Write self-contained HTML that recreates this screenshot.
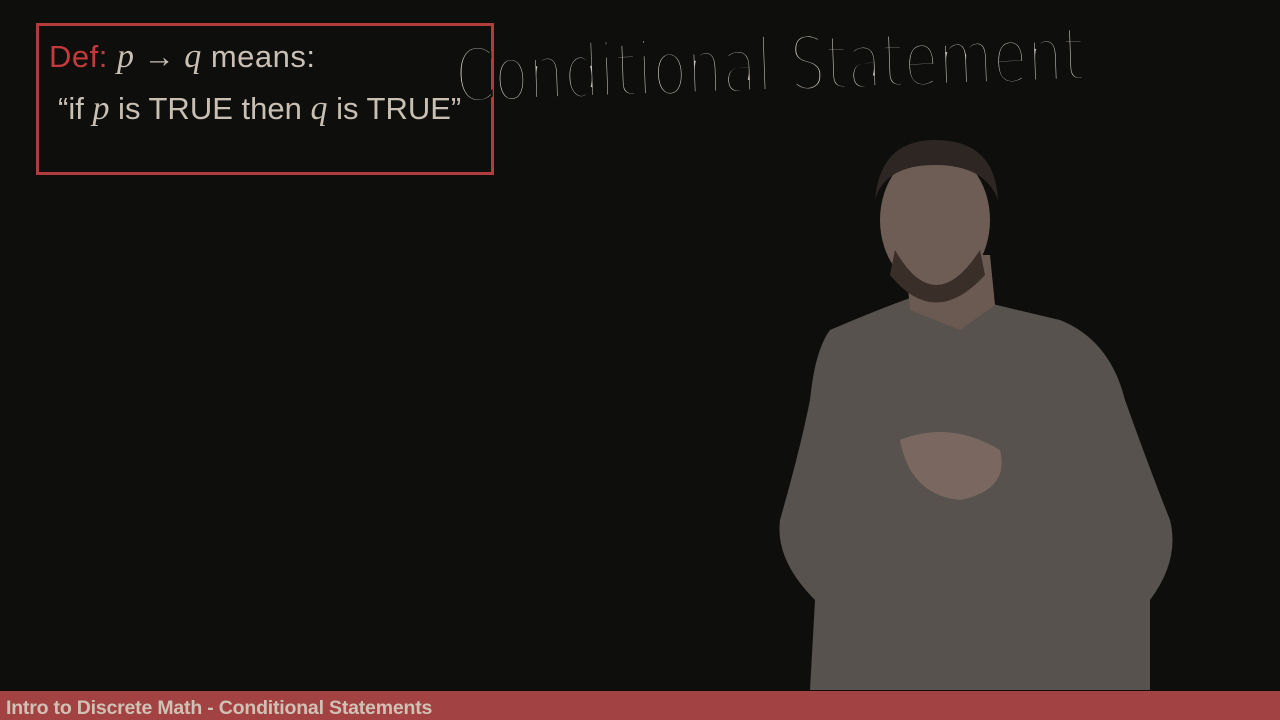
<!DOCTYPE html>
<html><head><style>
html,body{margin:0;padding:0;width:1280px;height:720px;overflow:hidden;background:#0e0f0d;font-family:"Liberation Sans",sans-serif}
.box{position:absolute;left:36px;top:23px;width:452px;height:146px;border:3px solid #b03c3c}
.l1{position:absolute;left:49px;top:38px;font-size:31px;color:#c9bfb3;white-space:nowrap;letter-spacing:0.5px}
.l2{position:absolute;left:58px;top:90px;font-size:31px;color:#c9bfb3;white-space:nowrap;letter-spacing:0px}
.red{color:#c23a3a}
i{font-family:"Liberation Serif",serif;font-size:34px}
.bar{position:absolute;left:0;top:691px;width:1280px;height:29px;background:#a24242}
.bar span{position:absolute;left:6px;top:6px;font-size:19.5px;color:#cfc2b5;font-weight:bold;letter-spacing:-0.2px}
</style></head><body>
<div class="box"></div>
<div class="l1"><span class="red">Def:</span> <i>p</i> → <i>q</i> means:</div>
<div class="l2">“if <i>p</i> is TRUE then <i>q</i> is TRUE”</div>
<svg width="1280" height="720" style="position:absolute;left:0;top:0">
<text x="455" y="90" font-family="DejaVu Sans" font-size="72" fill="#cfc6bb" textLength="630" lengthAdjust="spacingAndGlyphs" transform="rotate(-2 770 70)" style="font-weight:100;font-stretch:condensed" stroke="#0e0f0d" stroke-width="2.5" paint-order="normal">Conditional Statement</text>
<path d="M830 330 Q900 300 935 290 Q975 300 1060 320 Q1110 340 1125 400 Q1150 470 1170 520 Q1180 560 1150 600 L1150 690 L810 690 L815 600 Q775 560 780 520 Q800 450 810 400 Q815 350 830 330Z" fill="#57524d"/>
<path d="M905 255 L910 310 L960 330 L995 305 L990 255Z" fill="#6b5a52"/>
<ellipse cx="935" cy="220" rx="55" ry="70" fill="#6e5d55"/>
<path d="M875 200 Q880 140 935 140 Q995 140 998 200 Q985 165 935 165 Q885 165 875 200Z" fill="#2e2622"/>
<path d="M895 250 Q935 320 980 250 L985 275 Q935 330 890 275Z" fill="#3a2e29"/>
<path d="M900 440 Q950 420 1000 450 Q1010 490 960 500 Q910 495 900 440Z" fill="#7a6860"/>
</svg>
<div class="bar"><span>Intro to Discrete Math - Conditional Statements</span></div>
</body></html>
